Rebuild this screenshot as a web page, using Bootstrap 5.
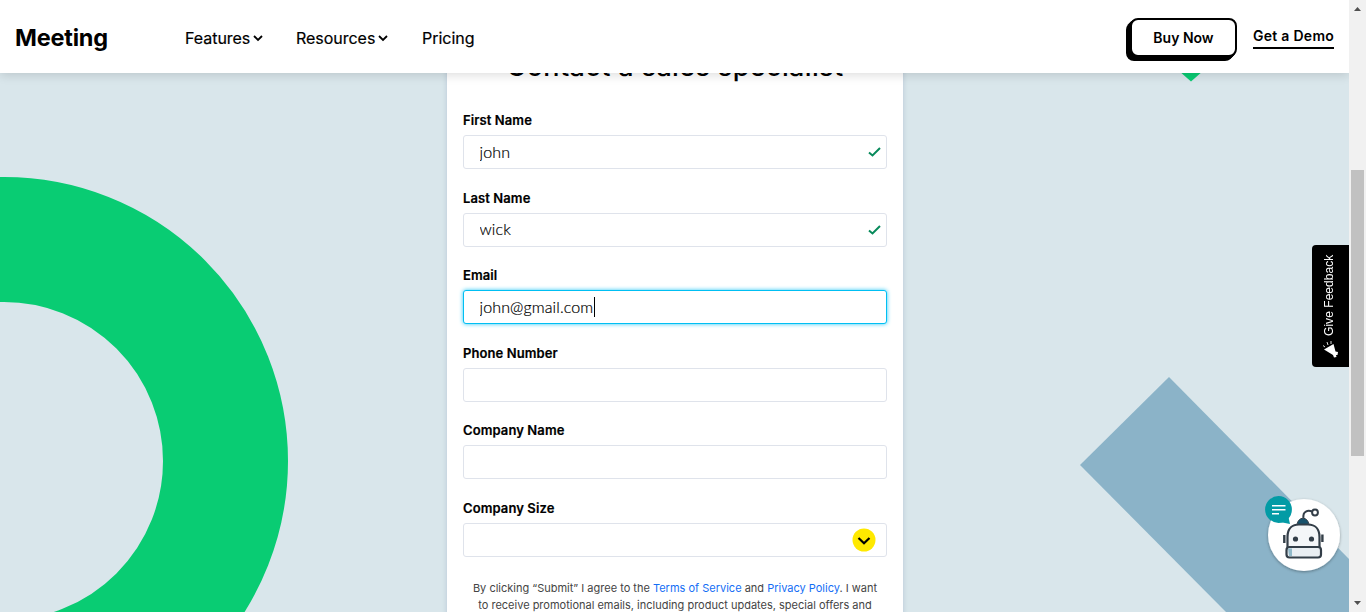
<!DOCTYPE html>
<html lang="en">
<head>
<meta charset="utf-8">
<meta name="viewport" content="width=device-width, initial-scale=1">
<title>Meeting</title>
<link href="https://cdn.jsdelivr.net/npm/bootstrap@5.3.0/dist/css/bootstrap.min.css" rel="stylesheet">
<style>
body{height:612px;overflow:hidden;font-family:Inter,sans-serif;color:#000}
.page{height:612px;background:#d9e6eb;min-width:0}
.topbar{height:73px;padding:0 15px;box-shadow:0 2px 10px rgba(0,0,0,.14);z-index:5}
.brand{font-size:23.5px;font-weight:700;line-height:30px;width:92px;margin:2px 78px 0 0;letter-spacing:-.2px}
.topnav{padding-top:2px}
.menu{font-size:16px;line-height:24px;color:#000;letter-spacing:-.03px;-webkit-text-stroke:.2px #000}
.menu svg{margin-left:3px}
.w-features{width:111px}
.w-resources{width:126px}
.buy{width:107px;height:39px;margin:1px 16px 0 0;border:2px solid #000;border-radius:8px;background:#fff;color:#000;font-weight:600;font-size:14px;padding:0;box-shadow:-1px 1px #000,-2px 2px #000,-3px 3px #000,-4px 4px #000}
.demo{font-size:14px;font-weight:600;line-height:21px;height:24px;width:81px;border-bottom:2px solid #000;color:#000;white-space:nowrap;letter-spacing:.28px}
.shapes{inset:0;width:1349px;height:612px}
.panel{width:456px;height:560px;margin:-10px 446px 0 447px;background:#fff;padding:0 16px;border:0;border-radius:0;box-shadow:0 0 5px rgba(140,165,190,.45)}
.heading{font-size:27px;font-weight:500;line-height:32px;margin:-12px 0 28px;text-align:center;white-space:nowrap;letter-spacing:.35px}
.field{height:77.6px}
.field label{display:block;font-size:13px;font-weight:600;line-height:18px;height:24px;width:max-content;letter-spacing:.1px;-webkit-text-stroke:.2px #000}
.field .form-control{height:34px;border:1px solid #dfe3eb;border-radius:3px;padding:0 16px 2px 15.5px;font:300 16px/30px Lato,sans-serif;color:#000;background:#fff;letter-spacing:.12px;-webkit-text-stroke:.2px #000}
.field .active-input{border-color:#00bff3;box-shadow:0 0 4px #28c8f5}
.mark-icon{right:5px;top:11px}
.cursor{left:131px;top:7px;width:1px;height:20px;background:#000}
.size-icon{right:11px;top:5px}
.legal{font-size:11px;line-height:17px;color:#444;text-align:center;white-space:nowrap;margin-top:3px}
.legal a{color:#146ef5;text-decoration:none}
.feedback{right:0;top:245px;width:37px;height:122px;background:#000;color:#fff;border-radius:4px 0 0 4px;z-index:4}
.feedback span{writing-mode:vertical-rl;transform:rotate(180deg);font:12px/16px "Liberation Sans",sans-serif;letter-spacing:.05px;position:absolute;left:9px;top:9px;height:82px;white-space:nowrap}
.feedback svg{position:absolute;left:9px;top:94px}
.chat{right:5px;top:490px;z-index:4}
.scrollrail{width:17px;height:612px;background:#f1f1f1}
.scrollthumb{left:2px;top:170px;width:13px;height:286px;background:#c1c1c1}
</style>
</head>
<body class="d-flex">
<div class="page position-relative flex-grow-1 overflow-hidden">
<svg class="shapes position-absolute" viewBox="0 0 1349 612" aria-hidden="true"><circle cx="4" cy="461" r="221.5" fill="none" stroke="#09cc73" stroke-width="125"/><path d="M1169 377 1349 559V612H1226L1080 465Z" fill="#8bb3c8"/><path d="M1170 63H1212L1191 81.500Z" fill="#09cc73"/></svg>
<header class="topbar bg-white d-flex align-items-center position-relative">
<div class="brand"><span>Meeting</span></div>
<nav class="topnav d-flex flex-grow-1">
<a class="menu w-features text-decoration-none d-flex align-items-center" href="#"><span>Features</span><svg width="10" height="8" viewBox="0 0 10 8" fill="none" stroke="#000" stroke-width="1.800"><path d="M1 2 5 6 9 2"/></svg></a>
<a class="menu w-resources text-decoration-none d-flex align-items-center" href="#"><span>Resources</span><svg width="10" height="8" viewBox="0 0 10 8" fill="none" stroke="#000" stroke-width="1.800"><path d="M1 2 5 6 9 2"/></svg></a>
<a class="menu text-decoration-none" href="#">Pricing</a>
</nav>
<button class="buy">Buy Now</button><a class="demo text-decoration-none" href="#">Get a Demo</a>
</header>
<main class="panel card">
<h1 class="heading">Contact a sales specialist</h1>
<form>
<div class="field"><label for="first">First Name</label><div class="position-relative"><input id="first" class="form-control" value="john"><svg class="mark-icon position-absolute" width="14" height="12" viewBox="0 0 14 12" fill="none" stroke="#078a5b" stroke-width="2"><path d="M1 6.500 4.500 9.500 12 2"/></svg></div></div>
<div class="field"><label for="last">Last Name</label><div class="position-relative"><input id="last" class="form-control" value="wick"><svg class="mark-icon position-absolute" width="14" height="12" viewBox="0 0 14 12" fill="none" stroke="#078a5b" stroke-width="2"><path d="M1 6.500 4.500 9.500 12 2"/></svg></div></div>
<div class="field"><label for="email">Email</label><div class="position-relative"><input id="email" class="form-control active-input" value="john@gmail.com"><i class="cursor position-absolute"></i></div></div>
<div class="field"><label for="phone">Phone Number</label><input id="phone" class="form-control"></div>
<div class="field"><label for="company">Company Name</label><input id="company" class="form-control"></div>
<div class="field"><label for="size">Company Size</label><div class="position-relative"><input id="size" class="form-control"><svg class="size-icon position-absolute" width="24" height="24" viewBox="0 0 24 24" fill="none"><circle cx="12" cy="12" r="11.500" fill="#ffe900"/><path d="M6.500 10 12 15.300 17.500 10" stroke="#000" stroke-width="2.200"/></svg></div></div>
<div class="legal">By clicking “Submit” I agree to the <a href="#">Terms of Service</a> and <a href="#">Privacy Policy</a>. I want<br>to receive promotional emails, including product updates, special offers and</div>
</form>
</main>
<div class="feedback position-absolute"><span>Give Feedback</span><svg width="20" height="20" viewBox="0 0 20 20" fill="#fff"><path d="M3 10.500 12.500 5 14.500 12.500 17 13 16.500 16 15 16 15.500 18 13 18.500 12 16Z"/><path d="M2 6.500 4 8M6 3l1 3M10 2v3" stroke="#ddd"/></svg></div>
<svg class="chat position-absolute" width="84" height="90" viewBox="1260 490 84 90" role="img" aria-label="Chat">
<defs><filter id="soft" x="-20%" y="-20%" width="140%" height="140%"><feDropShadow dx="0" dy="1" stdDeviation="1.500" flood-opacity=".35"/></filter></defs>
<circle cx="1304" cy="535" r="36" fill="#fff" filter="url(#soft)"/>
<path d="M1303.500 518C1302.500 511 1308 510 1312 511.500" fill="none" stroke="#333e48" stroke-width="2"/><circle cx="1315" cy="512.500" r="2.900" fill="#fff" stroke="#333e48" stroke-width="2"/>
<path d="M1297 525C1298 516 1308 516 1309 525Z" fill="#17516b" stroke="#333e48"/>
<path d="M1287.500 547V537C1287.500 528 1293 524.500 1299 524.500H1308C1315 524.500 1319.500 529 1319.500 537V547" fill="#f4f6f8" stroke="#333e48" stroke-width="2.200"/>
<rect x="1286.500" y="547" width="34.500" height="10.500" rx="3" fill="#e9eef2" stroke="#333e48" stroke-width="2.200"/><path d="M1288 548.500H1292V556H1289Z" fill="#91b9c9"/>
<path d="M1284.300 535V543M1322.400 534.500V542" stroke="#333e48" stroke-width="2.400"/><circle cx="1295.500" cy="539" r="2.600" fill="#333e48"/><circle cx="1311.500" cy="539" r="2.600" fill="#333e48"/>
<circle cx="1278.500" cy="509.500" r="13.400" fill="#039ba5"/><path d="M1280 522 1290 524 1288 515Z" fill="#039ba5"/><path d="M1272 505.800H1285.500M1272 509.800H1285.500M1272 513.800H1279" stroke="#fff" stroke-width="1.600"/>
</svg>
</div>
<div class="scrollrail position-relative flex-shrink-0"><div class="scrollthumb position-absolute"></div><svg class="position-absolute top-0 start-0" width="17" height="612" fill="#505050"><path d="M5 11H12L8.500 7ZM5 601H12L8.500 605Z"/></svg></div>
<script src="https://cdn.jsdelivr.net/npm/bootstrap@5.3.0/dist/js/bootstrap.bundle.min.js"></script>
</body>
</html>
